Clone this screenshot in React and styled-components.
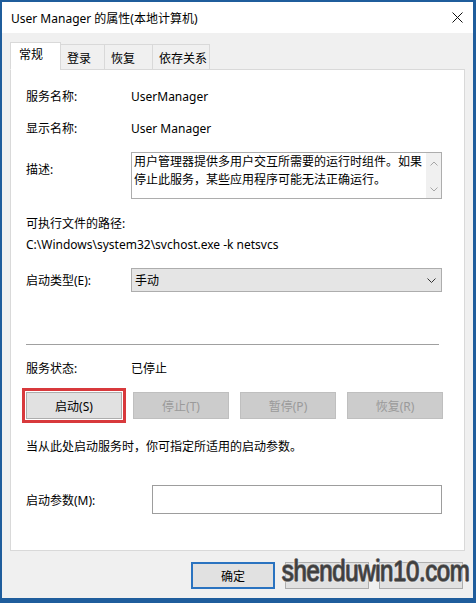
import React from "react";
import styled, { createGlobalStyle } from "styled-components";

const GlobalStyle = createGlobalStyle`
  html, body {
    margin: 0;
    padding: 0;
    background: #fff;
  }
  body {
    font-family: "Noto Sans", "Noto Sans CJK SC", sans-serif;
    font-size: 12px;
    color: #000;
  }
`;

const tabs = [
  { label: "常规", width: 51, active: true },
  { label: "登录", width: 45 },
  { label: "恢复", width: 49 },
  { label: "依存关系", width: 58 },
];

const serviceButtons = [
  { label: "启动(S)", enabled: true },
  { label: "停止(T)" },
  { label: "暂停(P)" },
  { label: "恢复(R)" },
];

export default function App() {
  return (
    <>
      <GlobalStyle />
      <Window>
        <TitleBar>
          <Title>User Manager 的属性(本地计算机)</Title>
          <CloseIcon viewBox="0 0 11 11">
            <path d="M0.5 0.5 L10.5 10.5 M10.5 0.5 L0.5 10.5" />
          </CloseIcon>
        </TitleBar>

        <Body>
          <TabBar>
            {tabs.map((t) => (
              <Tab key={t.label} $active={t.active} $width={t.width}>
                {t.label}
              </Tab>
            ))}
          </TabBar>

          <Panel>
            <InfoRow $mt={16}>
              <Label>服务名称:</Label>
              <Value>UserManager</Value>
            </InfoRow>
            <InfoRow $mt={12}>
              <Label>显示名称:</Label>
              <Value>User Manager</Value>
            </InfoRow>

            <DescRow>
              <Label $pt={8}>描述:</Label>
              <DescBox>
                <DescText>
                  用户管理器提供多用户交互所需要的运行时组件。如果停止此服务，某些应用程序可能无法正确运行。
                </DescText>
                <ScrollBar>
                  <ArrowIcon viewBox="0 0 8 5">
                    <path d="M0.5 4.5 L4 1 L7.5 4.5" />
                  </ArrowIcon>
                  <ArrowIcon viewBox="0 0 8 5">
                    <path d="M0.5 0.5 L4 4 L7.5 0.5" />
                  </ArrowIcon>
                </ScrollBar>
              </DescBox>
            </DescRow>

            <TextLine $mt={17}>可执行文件的路径:</TextLine>
            <TextLine $mt={5}>C:\Windows\system32\svchost.exe -k netsvcs</TextLine>

            <InfoRow $mt={15} $h={24}>
              <Label>启动类型(E):</Label>
              <Select>
                <span>手动</span>
                <Chevron viewBox="0 0 9 5">
                  <path d="M0.5 0.5 L4.5 4.5 L8.5 0.5" />
                </Chevron>
              </Select>
            </InfoRow>

            <Separator />

            <InfoRow $mt={13}>
              <Label>服务状态:</Label>
              <Value>已停止</Value>
            </InfoRow>

            <ButtonRow>
              {serviceButtons.map((b) => (
                <ServiceButton key={b.label} disabled={!b.enabled} $marked={b.enabled}>
                  {b.label}
                </ServiceButton>
              ))}
            </ButtonRow>

            <TextLine $mt={20}>当从此处启动服务时，你可指定所适用的启动参数。</TextLine>

            <InfoRow $mt={30} $h={29}>
              <Label $width={126}>启动参数(M):</Label>
              <ParamInput />
            </InfoRow>
          </Panel>

          <Footer>
            <DialogButton $default>确定</DialogButton>
            {/* 取消 / 应用 sit under the watermark, their captions are not visible */}
            <DialogButton aria-label="取消" />
            <DialogButton aria-label="应用" />
            <Watermark>shenduwin10.com</Watermark>
          </Footer>
        </Body>
      </Window>
    </>
  );
}

const Window = styled.div`
  width: 476px;
  height: 603px;
  box-sizing: border-box;
  border: 2px solid #1f5d9c;
  border-right-width: 3px;
  border-bottom-width: 5px;
  display: flex;
  flex-direction: column;
  overflow: hidden;
`;

const TitleBar = styled.div`
  height: 31px;
  flex-shrink: 0;
  background: #fff;
  display: flex;
  align-items: center;
  justify-content: space-between;
  padding: 0 10px 0 9px;
`;

const Title = styled.div`
  font-size: 12px;
  color: #000;
  white-space: nowrap;
`;

const CloseIcon = styled.svg`
  width: 11px;
  height: 11px;
  stroke: #111;
  stroke-width: 1;
  fill: none;
`;

const Body = styled.div`
  flex: 1;
  background: #f0f0f0;
  padding: 9px 8px 0 8px;
  display: flex;
  flex-direction: column;
`;

const TabBar = styled.div`
  display: flex;
  align-items: flex-end;
  height: 28px;
  margin-bottom: -1px;
  position: relative;
  z-index: 1;
`;

const Tab = styled.div`
  box-sizing: border-box;
  width: ${(p) => p.$width}px;
  height: ${(p) => (p.$active ? 28 : 26)}px;
  padding: ${(p) => (p.$active ? "3px 0 0 8px" : "5px 0 0 6px")};
  background: ${(p) => (p.$active ? "#fff" : "#f0f0f0")};
  border: 1px solid #d9d9d9;
  border-bottom: ${(p) => (p.$active ? "1px solid #fff" : "1px solid #d9d9d9")};
  margin-left: ${(p) => (p.$active ? 0 : -1)}px;
  font-size: 12px;
  line-height: 18px;
  white-space: nowrap;
`;

const Panel = styled.div`
  box-sizing: border-box;
  height: 482px;
  flex-shrink: 0;
  background: #fff;
  border: 1px solid #d9d9d9;
  padding: 0 21px 0 15px;
  display: flex;
  flex-direction: column;
`;

const InfoRow = styled.div`
  display: flex;
  align-items: center;
  height: ${(p) => p.$h || 20}px;
  margin-top: ${(p) => p.$mt || 0}px;
`;

const Label = styled.div`
  width: ${(p) => p.$width || 105}px;
  flex-shrink: 0;
  padding-top: ${(p) => p.$pt || 0}px;
  white-space: nowrap;
`;

const Value = styled.div`
  white-space: nowrap;
`;

const DescRow = styled.div`
  display: flex;
  align-items: flex-start;
  margin-top: 14px;
`;

const DescBox = styled.div`
  box-sizing: border-box;
  width: 311px;
  height: 47px;
  border: 1px solid #adadad;
  display: flex;
`;

const DescText = styled.div`
  flex: 1;
  padding: 0 3px 0 2px;
  line-height: 18px;
  overflow: hidden;
`;

const ScrollBar = styled.div`
  width: 15px;
  background: #f0f0f0;
  display: flex;
  flex-direction: column;
  align-items: center;
  justify-content: space-between;
  padding: 8px 0 6px;
`;

const ArrowIcon = styled.svg`
  width: 8px;
  height: 5px;
  stroke: #a6a6a6;
  stroke-width: 1;
  fill: none;
`;

const TextLine = styled.div`
  line-height: 16px;
  margin-top: ${(p) => p.$mt || 0}px;
  white-space: nowrap;
`;

const Select = styled.div`
  box-sizing: border-box;
  width: 311px;
  height: 24px;
  background: #e5e5e5;
  border: 1px solid #adadad;
  display: flex;
  align-items: center;
  justify-content: space-between;
  padding: 0 5px 0 3px;
`;

const Chevron = styled.svg`
  width: 9px;
  height: 5px;
  stroke: #333;
  stroke-width: 1;
  fill: none;
`;

const Separator = styled.div`
  height: 1px;
  background: #a0a0a0;
  margin: 52px 4px 0 0;
`;

const ButtonRow = styled.div`
  display: flex;
  justify-content: space-between;
  margin-top: 14px;
`;

const ServiceButton = styled.button`
  box-sizing: border-box;
  width: 96px;
  height: 27px;
  font: inherit;
  font-size: 12px;
  padding: 0;
  background: ${(p) => (p.disabled ? "#cccccc" : "#e1e1e1")};
  color: ${(p) => (p.disabled ? "#9a9a9a" : "#000")};
  border: 1px solid ${(p) => (p.disabled ? "#bfbfbf" : "#adadad")};
  outline: ${(p) => (p.$marked ? "3px solid #d8393c" : "none")};
  outline-offset: 1px;
`;

const ParamInput = styled.div`
  box-sizing: border-box;
  width: 290px;
  height: 29px;
  background: #fff;
  border: 1px solid #9d9d9d;
`;

const Footer = styled.div`
  position: relative;
  flex: 1;
  display: flex;
  justify-content: flex-end;
  align-items: flex-start;
  gap: 10px;
  padding: 11px 2px 0 0;
`;

const DialogButton = styled.button`
  box-sizing: border-box;
  width: 84px;
  height: 27px;
  font: inherit;
  font-size: 12px;
  padding: 0;
  background: #e1e1e1;
  color: #000;
  border: ${(p) => (p.$default ? "2px solid #2a73c0" : "1px solid #adadad")};
`;

const Watermark = styled.div`
  position: absolute;
  right: -4px;
  top: 3px;
  font-family: "Liberation Sans Narrow", "Liberation Sans", sans-serif;
  font-size: 30px;
  letter-spacing: -0.5px;
  line-height: 34px;
  color: #3f3f3f;
  transform: scaleX(0.8);
  transform-origin: right center;
  -webkit-text-stroke: 0.6px #3f3f3f;
  text-shadow: 1px 0 0 #9a9a9a, -1px 0 0 #9a9a9a, 0 1px 0 #9a9a9a, 0 -1px 0 #9a9a9a,
    0 0 3px #fff, 0 0 3px #fff;
  white-space: nowrap;
  pointer-events: none;
`;
